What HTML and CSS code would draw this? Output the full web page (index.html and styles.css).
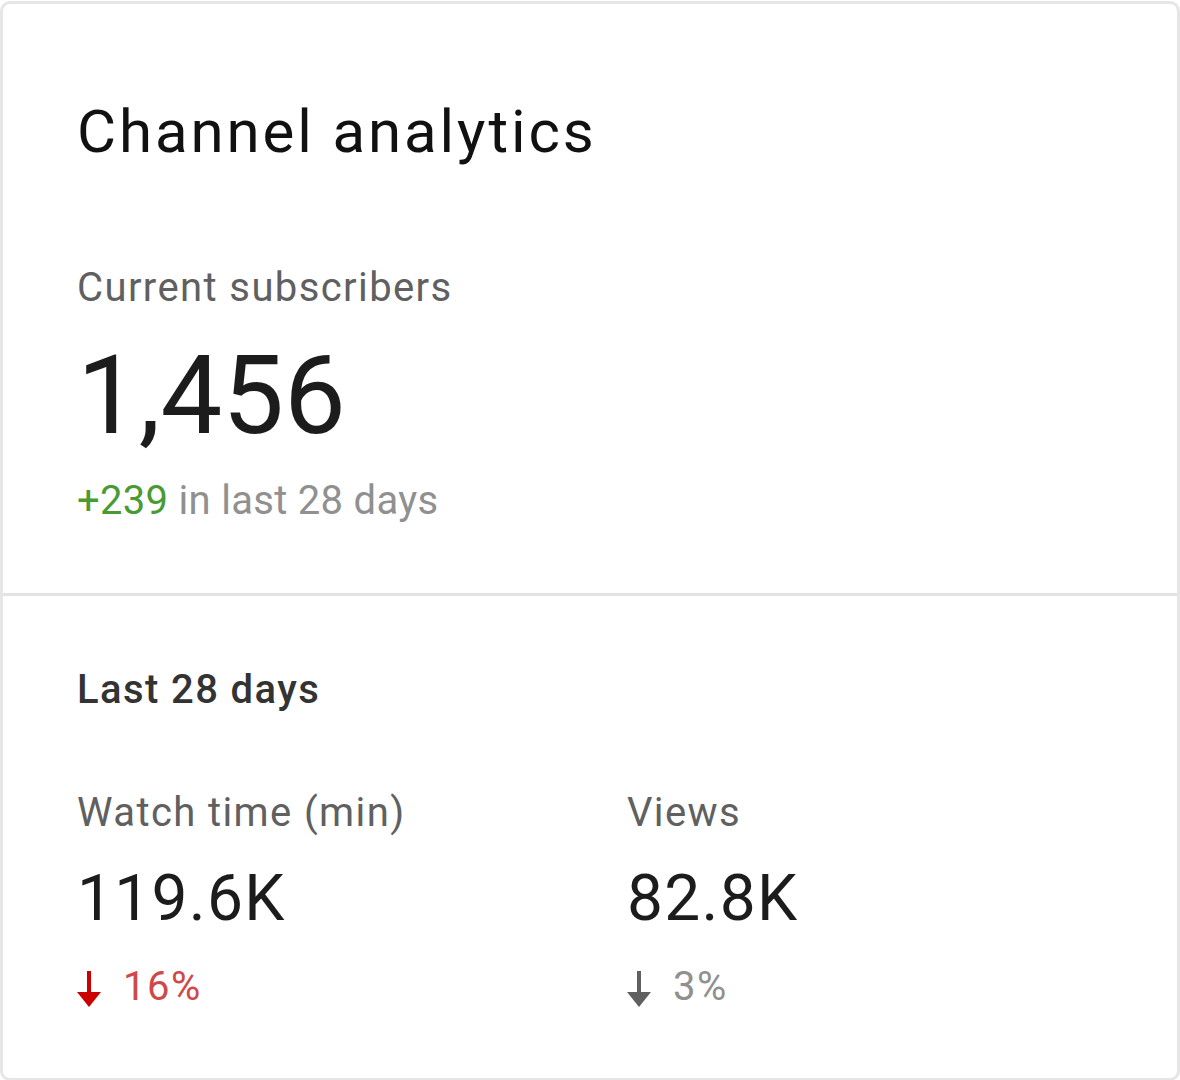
FILE: index.html
```html
<!DOCTYPE html>
<html lang="en">
<head>
    <meta charset="UTF-8">
    <title>Channel analytics</title>
    <link rel="stylesheet" href="styles.css">
</head>
<body>
    <div class="card">
        <div class="section top">
            <h1 class="title">Channel analytics</h1>
            <div class="label">Current subscribers</div>
            <div class="big-number">1,456</div>
            <div class="delta"><span class="up">+239</span> in last 28 days</div>
        </div>

        <div class="section bottom">
            <div class="period">Last 28 days</div>
            <div class="metrics">
                <div class="metric">
                    <div class="label">Watch time (min)</div>
                    <div class="value">119.6K</div>
                    <div class="change down-red">
                        <svg class="arrow" viewBox="0 0 24 36" width="24" height="36"><rect x="10" y="0" width="4" height="24"/><polygon points="0,21 24,21 12,36"/></svg>
                        <span>16%</span>
                    </div>
                </div>
                <div class="metric">
                    <div class="label">Views</div>
                    <div class="value">82.8K</div>
                    <div class="change down-grey">
                        <svg class="arrow" viewBox="0 0 24 36" width="24" height="36"><rect x="10" y="0" width="4" height="24"/><polygon points="0,21 24,21 12,36"/></svg>
                        <span>3%</span>
                    </div>
                </div>
            </div>
        </div>
    </div>
</body>
</html>
```

FILE: styles.css
```css
body { margin: 0; padding-top: 1px; font-family: Roboto, "Noto Sans", sans-serif; background: #fff; }
.card { border: 3px solid #e6e6e6; border-radius: 10px; background: #fff; }
.section { padding: 0 74px; }
.top { padding-top: 93px; padding-bottom: 68px; border-bottom: 3px solid #e3e3e3; }
.title { margin: 0; font-size: 60px; line-height: 70px; font-weight: 400; color: #111; letter-spacing: 2.9px; }
.label { font-size: 40px; line-height: 48px; color: #606060; letter-spacing: 1.4px; }
.top .label { margin-top: 97px; }
.big-number { margin-top: 24px; font-size: 110px; line-height: 120px; color: #1c1c1c; }
.delta { margin-top: 21px; font-size: 40px; line-height: 48px; color: #909090; letter-spacing: 0.3px; }
.delta .up { color: #4a9a34; }
.bottom { padding-top: 70px; padding-bottom: 67px; }
.period { font-size: 40px; line-height: 48px; font-weight: 500; color: #333; letter-spacing: 1.4px; }
.metrics { display: grid; grid-template-columns: 550px 1fr; margin-top: 75px; }
.value { margin-top: 24px; font-size: 64px; line-height: 76px; color: #1c1c1c; letter-spacing: 1.3px; }
.change { margin-top: 26px; display: flex; align-items: center; gap: 22px; font-size: 40px; line-height: 48px; letter-spacing: 1.5px; }
.arrow { display: block; margin-top: 4px; }
.down-red { color: #d04848; }
.down-red .arrow { fill: #c00; }
.down-grey { color: #909090; }
.down-grey .arrow { fill: #606060; }
```
